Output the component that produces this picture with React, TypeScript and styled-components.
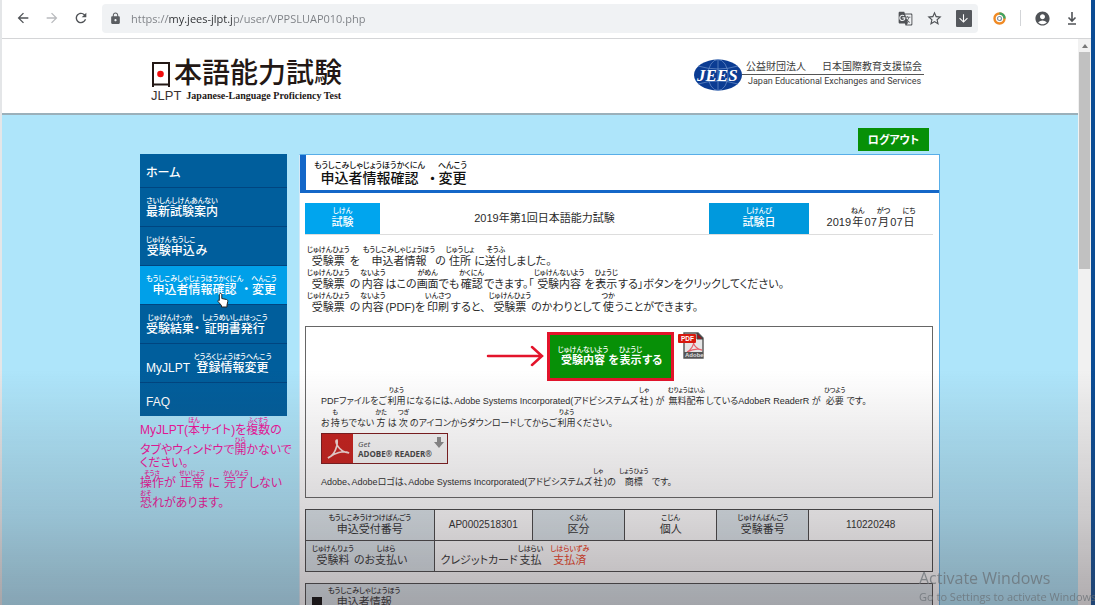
import React from "react";
import styled, { createGlobalStyle, css } from "styled-components";
import {
  MdAccountCircle,
  MdArrowBack,
  MdArrowDownward,
  MdArrowForward,
  MdGTranslate,
  MdLock,
  MdRefresh,
  MdStarBorder,
} from "react-icons/md";

const Global = createGlobalStyle`
  * { box-sizing: border-box; }
  body {
    margin: 0;
    background: #0b4c94;
    font-family: "Liberation Sans", "Noto Sans CJK JP", sans-serif;
    font-feature-settings: "palt";
    color: #2b2b2b;
  }
  p, h1, ul { margin: 0; padding: 0; }
  button, input { font: inherit; font-feature-settings: inherit; border: 0; padding: 0; }
`;

const Browser = styled.div`
  display: flex;
  flex-direction: column;
  height: 100vh;
  overflow: hidden;
  margin-right: 4px;
  border-left: 2px solid #e4e6e8;
  background: #fff;
`;

const Toolbar = styled.header`
  display: flex;
  flex: none;
  align-items: center;
  height: 39px;
  padding: 0 5px 2px 13px;
  border-bottom: 1px solid #d4d5d7;
  background: #fff;
`;

const IconButton = styled.button<{ $muted?: boolean; $width?: number }>`
  display: flex;
  flex: none;
  align-items: center;
  justify-content: center;
  width: ${(p) => p.$width ?? 29}px;
  height: 28px;
  background: none;
  color: ${(p) => (p.$muted ? "#b9bbbe" : "#505357")};
`;

const AddressBar = styled.div`
  display: flex;
  flex: 1;
  align-items: center;
  height: 29px;
  margin-left: 13px;
  padding: 0 0 0 7px;
  border-radius: 4px;
  background: #f0f2f4;
  color: #5a5d61;
`;

const Address = styled.input`
  flex: 1;
  min-width: 0;
  margin-left: 9px;
  height: 20px;
  outline: 0;
  font-family: "Open Sans", "Noto Sans", sans-serif;
  font-size: 11px;
  background: linear-gradient(90deg, #7b7e83 37px, #2c2e31 37px 102px, #7b7e83 102px);
  background-clip: text;
  -webkit-text-fill-color: transparent;
`;

const DownBadge = styled.span`
  display: grid;
  place-items: center;
  width: 16px;
  height: 17px;
  border-radius: 1px;
  background: #55585d;
  color: #fff;
`;

const Separator = styled.span`
  width: 1px;
  height: 16px;
  margin-right: 7px;
  background: #d3d5d8;
`;

const Viewport = styled.div`
  display: flex;
  flex: 1;
  min-height: 0;
`;

const Page = styled.div`
  flex: 1;
  min-width: 0;
  overflow: hidden;
  background: #aee5fa;
`;

const Scrollbar = styled.div`
  flex: none;
  width: 13px;
  background: #f1f1f1;
`;

const ScrollArrow = styled.div`
  display: grid;
  place-items: center;
  height: 13px;
`;

const ScrollThumb = styled.div`
  height: 217px;
  margin: 0 1px;
  background: #c1c1c1;
`;

const Wrap = styled.div`
  width: 100%;
  max-width: 800px;
  margin: 0 auto;
`;

const Masthead = styled.div`
  height: 76px;
  border-bottom: 2px solid #9bb0ba;
  background: #fff;
`;

const MastheadInner = styled(Wrap)`
  display: flex;
  justify-content: space-between;
  padding: 20px 16px 0 11px;
`;

const LogoTitle = styled.div`
  display: flex;
  align-items: center;
  gap: 3px;
  height: 29px;
  font-size: 28px;
  line-height: 29px;
  font-weight: 500;
  color: #231815;
  font-feature-settings: normal;
`;

const LogoSub = styled.div`
  display: flex;
  align-items: center;
  gap: 5px;
  height: 16px;
  color: #231815;
`;

const Acronym = styled.span`
  font-size: 13px;
  line-height: 16px;
  color: #3b3231;
`;

const LogoName = styled.span`
  font: bold 10px/14px "Liberation Serif", serif;
`;

const Jees = styled.div`
  display: flex;
  align-items: flex-start;
`;

const JeesText = styled.div`
  padding-top: 2px;
  color: #3c3c3c;
  white-space: nowrap;
`;

const JeesJa = styled.div`
  display: flex;
  gap: 16px;
  padding: 0 2px 1px 4px;
  border-bottom: 1px solid #555;
  font-size: 10px;
  line-height: 12px;
`;

const JeesEn = styled.div`
  padding-left: 6px;
  font: 9px/12px Roboto, sans-serif;
`;

const TopActions = styled(Wrap)`
  display: flex;
  justify-content: flex-end;
  padding: 13px 11px 0 0;
`;

const Logout = styled.button`
  width: 71px;
  height: 23px;
  background: #079007;
  color: #fff;
  font-size: 11px;
  font-weight: 700;
  line-height: 20px;
`;

const Columns = styled(Wrap)`
  display: flex;
  align-items: flex-start;
  justify-content: space-between;
  padding-top: 3px;
`;

const Side = styled.aside`
  flex: none;
  width: 147px;
`;

const Menu = styled.ul`
  list-style: none;
`;

const MenuItem = styled.li<{ $active?: boolean }>`
  position: relative;
  border-bottom: 1px solid #004580;
  background: ${(p) => (p.$active ? "#00a0e9" : "#005e9c")};
  &:last-child { border-bottom: 0; }
`;

const MenuLink = styled.a<{ $plain?: boolean }>`
  display: flex;
  align-items: ${(p) => (p.$plain ? "center" : "flex-end")};
  height: ${(p) => (p.$plain ? 33 : 38)}px;
  padding: ${(p) => (p.$plain ? "4px 0 0 6px" : "0 0 7px 6px")};
  color: #fff;
  font-size: 12px;
  font-weight: 500;
  line-height: 14px;
  text-decoration: none;
  white-space: nowrap;
`;

const Pointer = styled.svg`
  position: absolute;
  left: 77px;
  top: 26px;
  z-index: 1;
`;

const Notice = styled.p`
  padding-top: 1px;
  color: #f0149c;
  font-size: 12px;
  line-height: 13px;
  white-space: nowrap;
`;

const Furigana = styled.ruby<{ $pad?: number }>`
  display: inline-flex;
  flex-direction: column-reverse;
  align-items: center;
  baseline-source: last;
  margin: 0 ${(p) => p.$pad ?? 0}px;
`;

const Reading = styled.rt<{ $size: number }>`
  display: block;
  font-size: ${(p) => p.$size}px;
  line-height: ${(p) => p.$size + 1}px;
  font-weight: 500;
  white-space: nowrap;
`;

const Main = styled.main`
  width: 641px;
  min-height: 520px;
  border: 1px solid #58aee8;
  border-left-color: #d5e9f6;
  background: #fff;
`;

const Heading = styled.h1`
  height: 38px;
  padding: 6px 0 0 8px;
  border-left: 6px solid #1467c8;
  border-bottom: 3px solid #1467c8;
  font-size: 14px;
  font-weight: 500;
  line-height: 16px;
  color: #111;
`;

const Body = styled.div`
  padding: 10px 6px 0 5px;
`;

const ExamTable = styled.table`
  width: 100%;
  border-collapse: collapse;
  table-layout: fixed;
  border-bottom: 1px solid #ddd;
  font-size: 11px;
  line-height: 14px;
  text-align: center;
`;

const ExamLabel = styled.th<{ $color: string; $width: number }>`
  width: ${(p) => p.$width}px;
  height: 31px;
  padding: 0;
  background: ${(p) => p.$color};
  color: #fff;
  font-weight: 500;
`;

const ExamValue = styled.td<{ $width?: number }>`
  ${(p) => p.$width && css`width: ${p.$width}px;`}
  padding: 0;
`;

const Message = styled.div`
  padding: 11px 0 0 2px;
  font-size: 11px;
  line-height: 15px;
  white-space: nowrap;
`;

const Box = styled.section`
  height: 172px;
  margin-top: 11px;
  padding: 5px 15px 0;
  border: 1px solid #666;
  font-size: 9px;
  line-height: 14px;
  white-space: nowrap;
`;

const ShowRow = styled.div`
  display: flex;
  justify-content: center;
  gap: 4px;
  padding-left: 12px;
`;

const ShowButton = styled.button`
  position: relative;
  width: 127px;
  height: 49px;
  border: 3px solid #e3142b;
  background: #079007;
  color: #fff;
  font-size: 11px;
  font-weight: 700;
  line-height: 13px;
`;

const Arrow = styled.svg`
  position: absolute;
  right: 127px;
  top: 9px;
`;

const PdfLine = styled.p<{ $top: number }>`
  padding-top: ${(p) => p.$top}px;
`;

const ReaderLink = styled.a`
  display: flex;
  width: 127px;
  height: 31px;
  margin-top: 3px;
  border: 1px solid #7c1a1c;
  background: #f6f6f6;
  color: #444;
  text-decoration: none;
`;

const ReaderText = styled.span`
  flex: 1;
  padding: 5px 0 0 5px;
  font: bold 8px/10px "Open Sans", sans-serif;
  & i { display: block; font-weight: 400; }
`;

const ReaderDown = styled.svg`
  margin: 3px 3px 0 0;
`;

const InfoTable = styled.table`
  width: 100%;
  margin-top: 11px;
  border-collapse: collapse;
  table-layout: fixed;
  font-size: 11px;
  line-height: 14px;
  text-align: center;
  & th, & td { height: 31px; padding: 0 6px; border: 1px solid #444; white-space: nowrap; }
  & th { background: #dce6eb; font-weight: 400; }
`;

const LeftTd = styled.td`
  text-align: left;
`;

const LeftTh = styled.th`
  text-align: left;
`;

const Code = styled.span`
  font-size: 10px;
`;

const Paid = styled.span`
  margin-left: 4px;
  color: #f03a17;
`;

const Section = styled.section`
  display: flex;
  align-items: flex-start;
  gap: 6px;
  height: 60px;
  margin-top: 11px;
  padding: 3px 6px;
  border: 1px solid #444;
  background: #dce6eb;
  font-size: 11px;
  line-height: 14px;
`;

const Square = styled.span`
  width: 10px;
  height: 10px;
  margin-top: 10px;
  background: #000;
`;

const Shade = styled.div`
  position: fixed;
  inset: auto 0 0 0;
  height: 235px;
  pointer-events: none;
  background: linear-gradient(180deg, rgba(70, 60, 66, 0), rgba(70, 60, 66, 0.09) 25%, rgba(70, 60, 66, 0.21) 62%, rgba(70, 60, 66, 0.33) 88%, rgba(70, 60, 66, 0.38));
`;

const Watermark = styled.div`
  position: fixed;
  left: calc(100vw - 176px);
  bottom: 0;
  overflow: hidden;
  color: rgba(105, 112, 118, 0.75);
  font: 11px/16px "Open Sans", "Noto Sans", sans-serif;
  white-space: nowrap;
  pointer-events: none;
`;

const WatermarkTitle = styled.div`
  font-size: 16px;
  line-height: 21px;
`;

type RProps = { children: React.ReactNode; r: string; size?: number; pad?: number };

const R = ({ children, r, size = 7, pad }: RProps) => (
  <Furigana $pad={pad}>
    {children}
    <Reading $size={size}>{r}</Reading>
  </Furigana>
);

const PdfIcon = () => (
  <svg width="26" height="28" viewBox="0 0 26 28" role="img" aria-label="PDF">
    <path d="M6 1h14l5 5v20H6z" fill="#e6e6e6" stroke="#555" strokeWidth="1.4" />
    <path d="M19 1v6h6z" fill="#a5121a" stroke="#444" />
    <path d="M9 20c4-2 7-7 7-11-2 1 1 8 8 9-5-2-11 0-15 2z" fill="none" stroke="#e8606a" strokeWidth="1.3" />
    <rect x="6" y="20" width="19" height="6" fill="#555" />
    <text x="7" y="25" fontSize="6" fontWeight="700" fill="#ddd" fontFamily="Liberation Sans">Adobe</text>
    <rect x="0" y="2" width="18" height="9" rx="1" fill="#d8190f" />
    <text x="3" y="9" fontSize="6.5" fontWeight="700" fill="#fff" fontFamily="Liberation Sans">PDF</text>
  </svg>
);

export default function App() {
  return (
    <>
      <Global />
      <Browser>
        <Toolbar>
          <IconButton aria-label="戻る" $width={16}><MdArrowBack size={16} /></IconButton>
          <IconButton aria-label="進む" $muted $width={42}><MdArrowForward size={16} /></IconButton>
          <IconButton aria-label="再読み込み" $width={16}><MdRefresh size={18} /></IconButton>
          <AddressBar>
            <MdLock size={13} />
            <Address aria-label="アドレス" defaultValue="https://my.jees-jlpt.jp/user/VPPSLUAP010.php" />
            <IconButton aria-label="翻訳"><MdGTranslate size={15} /></IconButton>
            <IconButton aria-label="ブックマーク"><MdStarBorder size={17} /></IconButton>
            <IconButton aria-label="保存"><DownBadge><MdArrowDownward size={13} /></DownBadge></IconButton>
          </AddressBar>
          <IconButton aria-label="拡張機能" $width={42}>
            <svg width="13" height="13" viewBox="0 0 13 13" fill="none">
              <circle cx="6.5" cy="6.5" r="5" stroke="#f08a24" strokeWidth="2.4" />
              <path d="M6.5 1.5a5 5 0 0 1 5 5" stroke="#3fa565" strokeWidth="2.4" />
              <circle cx="6.5" cy="6.5" r="2" stroke="#7a8fa5" strokeWidth="1.2" />
            </svg>
          </IconButton>
          <Separator />
          <IconButton aria-label="プロフィール"><MdAccountCircle size={17} /></IconButton>
          <IconButton aria-label="ダウンロード">
            <svg width="10" height="14" viewBox="0 0 10 14" fill="none" stroke="currentColor" strokeWidth="1.6">
              <path d="M5 1v9M1.5 6.5 5 10l3.500-3.500M1 13h8" />
            </svg>
          </IconButton>
        </Toolbar>

        <Viewport>
          <Page>
            <Masthead>
              <MastheadInner>
                <div>
                  <LogoTitle>
                    <svg width="20" height="26" viewBox="0 0 20 26" role="img" aria-label="日">
                      <path d="M2 26V2h16v24M2 23.500h16" fill="none" stroke="#231815" strokeWidth="2" />
                      <circle cx="9.500" cy="13" r="3.300" fill="#f00c0c" />
                    </svg>
                    <span>本語能力試験</span>
                  </LogoTitle>
                  <LogoSub>
                    <Acronym>JLPT</Acronym>
                    <LogoName>Japanese-Language Proficiency Test</LogoName>
                  </LogoSub>
                </div>
                <Jees>
                  <svg width="48" height="32" viewBox="0 0 48 32" role="img" aria-label="JEES">
                    <ellipse cx="24" cy="16" rx="24" ry="15.500" fill="#0b3c93" />
                    <g fill="none" stroke="#6f92cc" strokeWidth="0.700">
                      <ellipse cx="24" cy="16" rx="10" ry="15.500" />
                      <path d="M24 0v32M4 7q20 6 40 0M4 25q20-6 40 0" />
                    </g>
                    <text x="3" y="22" fontFamily="Liberation Serif" fontStyle="italic" fontWeight="700" fontSize="17" fill="#fff">JEES</text>
                  </svg>
                  <JeesText>
                    <JeesJa><span>公益財団法人</span><span>日本国際教育支援協会</span></JeesJa>
                    <JeesEn>Japan Educational Exchanges and Services</JeesEn>
                  </JeesText>
                </Jees>
              </MastheadInner>
            </Masthead>

            <TopActions><Logout>ログアウト</Logout></TopActions>

            <Columns>
              <Side>
                <nav>
                  <Menu>
                    <MenuItem><MenuLink $plain href="#home">ホーム</MenuLink></MenuItem>
                    <MenuItem><MenuLink href="#guide"><R r="さいしんしけんあんない">最新試験案内</R></MenuLink></MenuItem>
                    <MenuItem><MenuLink href="#apply"><R r="じゅけんもうしこ">受験申込</R>み</MenuLink></MenuItem>
                    <MenuItem $active>
                      <MenuLink href="#status">
                        <R r="もうしこみしゃじょうほうかくにん">申込者情報確認</R>・<R r="へんこう" pad={2}>変更</R>
                      </MenuLink>
                      <Pointer width="12" height="16" viewBox="0 0 12 16">
                        <path d="M3.500 1.500c1 0 1.300.5 1.300 1.500v3.500l4.700 1c1 .3 1.500 1 1.300 2L10 13v2H4.500v-1.500L1 9.500c-.5-1 .5-1.700 1.300-1V3c0-1 .3-1.500 1.200-1.500z" fill="#fff" stroke="#222" />
                      </Pointer>
                    </MenuItem>
                    <MenuItem>
                      <MenuLink href="#result"><R r="じゅけんけっか">受験結果</R>・<R r="しょうめいしょはっこう" pad={2}>証明書発行</R></MenuLink>
                    </MenuItem>
                    <MenuItem>
                      <MenuLink href="#profile">MyJLPT&nbsp;<R r="とうろくじょうほうへんこう">登録情報変更</R></MenuLink>
                    </MenuItem>
                    <MenuItem><MenuLink $plain href="#faq">FAQ</MenuLink></MenuItem>
                  </Menu>
                </nav>
                <Notice>
                  MyJLPT(<R r="ほん" size={6}>本</R>サイト)を<R r="ふくすう" size={6}>複数</R>の<br />
                  タブやウィンドウで<R r="ひら" size={6}>開</R>かないで<br />
                  ください。<br />
                  <R r="そうさ" size={6}>操作</R>が <R r="せいじょう" size={6}>正常</R> に <R r="かんりょう" size={6}>完了</R>しない<br />
                  <R r="おそ" size={6}>恐</R>れがあります。
                </Notice>
              </Side>

              <Main>
                <Heading>
                  <R r="もうしこみしゃじょうほうかくにん" size={8}>申込者情報確認</R> ・<R r="へんこう" size={8} pad={2}>変更</R>
                </Heading>
                <Body>
                  <ExamTable>
                    <tbody>
                      <tr>
                        <ExamLabel $color="#00a5ee" $width={75}><R r="しけん">試験</R></ExamLabel>
                        <ExamValue>2019年第1回日本語能力試験</ExamValue>
                        <ExamLabel $color="#0099dd" $width={100}><R r="しけんび">試験日</R></ExamLabel>
                        <ExamValue $width={124}>2019<R r="ねん">年</R>07<R r="がつ">月</R>07<R r="にち">日</R></ExamValue>
                      </tr>
                    </tbody>
                  </ExamTable>
                  <Message>
                    <p><R r="じゅけんひょう">受験票</R>を <R r="もうしこみしゃじょうほう">申込者情報</R>の<R r="じゅうしょ">住所</R>に<R r="そうふ">送付</R>しました。</p>
                    <p><R r="じゅけんひょう">受験票</R>の<R r="ないよう">内容</R>はこの<R r="がめん">画面</R>でも<R r="かくにん">確認</R>できます。「<R r="じゅけんないよう">受験内容</R>を<R r="ひょうじ">表示</R>する」ボタンをクリックしてください。</p>
                    <p><R r="じゅけんひょう">受験票</R>の<R r="ないよう">内容</R>(PDF)を<R r="いんさつ">印刷</R>すると、 <R r="じゅけんひょう">受験票</R>のかわりとして<R r="つか">使</R>うことができます。</p>
                  </Message>
                  <Box>
                    <ShowRow>
                      <ShowButton>
                        <R r="じゅけんないよう">受験内容</R>を<R r="ひょうじ">表示</R>する
                        <Arrow width="58" height="24" viewBox="0 0 58 24" fill="none" stroke="#e3142b" strokeWidth="2.500" strokeLinecap="round">
                          <path d="M2 12h53M46 3l10 9-10 9" />
                        </Arrow>
                      </ShowButton>
                      <PdfIcon />
                    </ShowRow>
                    <PdfLine $top={6}>
                      PDFファイルをご<R r="りよう" size={6} pad={1}>利用</R>になるには、Adobe Systems Incorporated(アドビシステムズ<R r="しゃ" size={6} pad={1}>社</R>) が <R r="むりょうはいふ" size={6} pad={1}>無料配布</R>しているAdobeR ReaderR が <R r="ひつよう" size={6} pad={1}>必要</R>です。
                    </PdfLine>
                    <PdfLine $top={1}>
                      お<R r="も" size={6} pad={1}>持</R>ちでない<R r="かた" size={6} pad={1}>方</R>は<R r="つぎ" size={6} pad={1}>次</R>のアイコンからダウンロードしてからご<R r="りよう" size={6} pad={1}>利用</R>ください。
                    </PdfLine>
                    <ReaderLink href="#reader">
                      <svg width="31" height="29" viewBox="0 0 31 29" aria-hidden="true">
                        <rect width="31" height="29" fill="#c5201c" />
                        <path d="M6 24c7-3 10-13 9-18-3 0 1 12 12 13-5-3-15 0-21 5z" fill="none" stroke="#f3d9d6" strokeWidth="1.700" />
                      </svg>
                      <ReaderText><i>Get</i>ADOBE® READER®</ReaderText>
                      <ReaderDown width="10" height="11" viewBox="0 0 10 11" aria-hidden="true">
                        <path d="M3 0h4v5h3l-5 6-5-6h3z" fill="#8a8a8a" />
                      </ReaderDown>
                    </ReaderLink>
                    <PdfLine $top={4}>
                      Adobe、Adobeロゴは、Adobe Systems Incorporated(アドビシステムズ<R r="しゃ" size={6} pad={1}>社</R>)の <R r="しょうひょう" size={6} pad={1}>商標</R> です。
                    </PdfLine>
                  </Box>
                  <InfoTable>
                    <colgroup>
                      <col style={{ width: "20.500%" }} />
                      <col style={{ width: "15.700%" }} />
                      <col style={{ width: "14.700%" }} />
                      <col style={{ width: "14.700%" }} />
                      <col style={{ width: "14.700%" }} />
                      <col />
                    </colgroup>
                    <tbody>
                      <tr>
                        <th scope="row"><R r="もうしこみうけつけばんごう">申込受付番号</R></th>
                        <td><Code>AP0002518301</Code></td>
                        <th scope="row"><R r="くぶん">区分</R></th>
                        <td><R r="こじん">個人</R></td>
                        <th scope="row"><R r="じゅけんばんごう">受験番号</R></th>
                        <td><Code>110220248</Code></td>
                      </tr>
                      <tr>
                        <LeftTh scope="row"><R r="じゅけんりょう">受験料</R>のお<R r="しはら">支払</R>い</LeftTh>
                        <LeftTd colSpan={5}>クレジットカード<R r="しはらい">支払</R> <Paid><R r="しはらいずみ">支払済</R></Paid></LeftTd>
                      </tr>
                    </tbody>
                  </InfoTable>
                  <Section>
                    <Square />
                    <R r="もうしこみしゃじょうほう">申込者情報</R>
                  </Section>
                </Body>
              </Main>
            </Columns>
          </Page>
          <Scrollbar>
            <ScrollArrow>
              <svg width="6" height="4" viewBox="0 0 6 4"><path d="M3 0l3 4H0z" fill="#777" /></svg>
            </ScrollArrow>
            <ScrollThumb />
          </Scrollbar>
        </Viewport>
      </Browser>
      <Shade />
      <Watermark>
        <WatermarkTitle>Activate Windows</WatermarkTitle>
        Go to Settings to activate Windows.
      </Watermark>
    </>
  );
}
